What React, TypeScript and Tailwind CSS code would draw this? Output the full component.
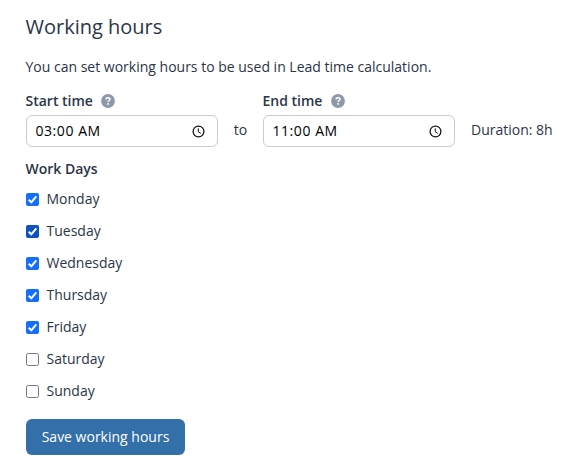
import React from "react";

const days = [
  { name: "Monday", on: true, hover: false },
  { name: "Tuesday", on: true, hover: true },
  { name: "Wednesday", on: true, hover: false },
  { name: "Thursday", on: true, hover: false },
  { name: "Friday", on: true, hover: false },
  { name: "Saturday", on: false, hover: false },
  { name: "Sunday", on: false, hover: false },
];

function Help() {
  return (
    <svg width="14" height="14" viewBox="0 0 14 14" fill="none">
      <circle cx="7" cy="7" r="6.9" fill="#8e99ab" />
      <path d="M4.9 5.4C5 4.4 5.9 3.8 7 3.8s2 .6 2 1.5c0 1.2-1.9 1.2-1.9 2.6" stroke="#fff" strokeWidth="1.45" />
      <circle cx="7.1" cy="9.9" r=".95" fill="#fff" />
    </svg>
  );
}

function Clock() {
  return (
    <svg width="13" height="13" viewBox="0 0 13 13" fill="none" stroke="#111">
      <circle cx="6.5" cy="6.5" r="5.4" strokeWidth="1.25" />
      <path d="M6.3 3.4v3.4l2.5 1.6" strokeWidth="1" />
    </svg>
  );
}

function TimeField({ label, value }: { label: string; value: string }) {
  return (
    <div className="w-48">
      <div className="flex h-[22px] items-center gap-2 font-semibold">
        <span className="-ml-[0.5px] mr-[0.5px]">{label}</span>
        <Help />
      </div>
      <div className="mt-[3px] flex h-8 items-center justify-between rounded-[6px] border border-[#cacad9] bg-white pl-[8.5px] pr-[12.5px] text-black">
        <span className="tracking-[0.55px]">{value}</span>
        <Clock />
      </div>
    </div>
  );
}

function Box({ on, hover }: { on: boolean; hover: boolean }) {
  if (!on) return <span className="size-[13px] rounded-[2.5px] border border-[#767676] bg-white" />;
  return (
    <span className={`flex size-[13px] items-center justify-center rounded-[2px] ${hover ? "bg-[#0f54bd]" : "bg-[#146ffb]"}`}>
      <svg width="13" height="13" viewBox="0 0 13 13" fill="none">
        <path d="M2.7 6.7l2.6 2.6 5-6" stroke="#fff" strokeWidth="2" />
      </svg>
    </span>
  );
}

export default function App() {
  return (
    <main className="h-[473px] bg-white pl-[26px] pt-3 font-['Open_Sans',sans-serif] text-sm leading-[22px] text-[#2b3547]">
      <h1 className="-ml-[0.5px] text-xl leading-[30px]">Working hours</h1>
      <p className="-ml-[0.5px] mt-[14px]">You can set working hours to be used in Lead time calculation.</p>
      <div className="mt-3 flex items-end">
        <TimeField label="Start time" value="03:00 AM" />
        <span className="flex h-8 w-[45px] items-center justify-center pb-0.5">to</span>
        <TimeField label="End time" value="11:00 AM" />
        <span className="ml-4 flex h-8 items-center pb-0.5">Duration: 8h</span>
      </div>
      <h2 className="-ml-[0.5px] mt-[11px] font-semibold">Work Days</h2>
      <div className="mt-[3px]">
        {days.map((d) => (
          <div key={d.name} className="flex h-8 items-center gap-[7.5px]">
            <Box on={d.on} hover={d.hover} />
            {d.name}
          </div>
        ))}
      </div>
      <button className="mt-3 h-9 w-[159px] rounded-[6px] bg-[#336fa9] font-medium text-white">Save working hours</button>
    </main>
  );
}
